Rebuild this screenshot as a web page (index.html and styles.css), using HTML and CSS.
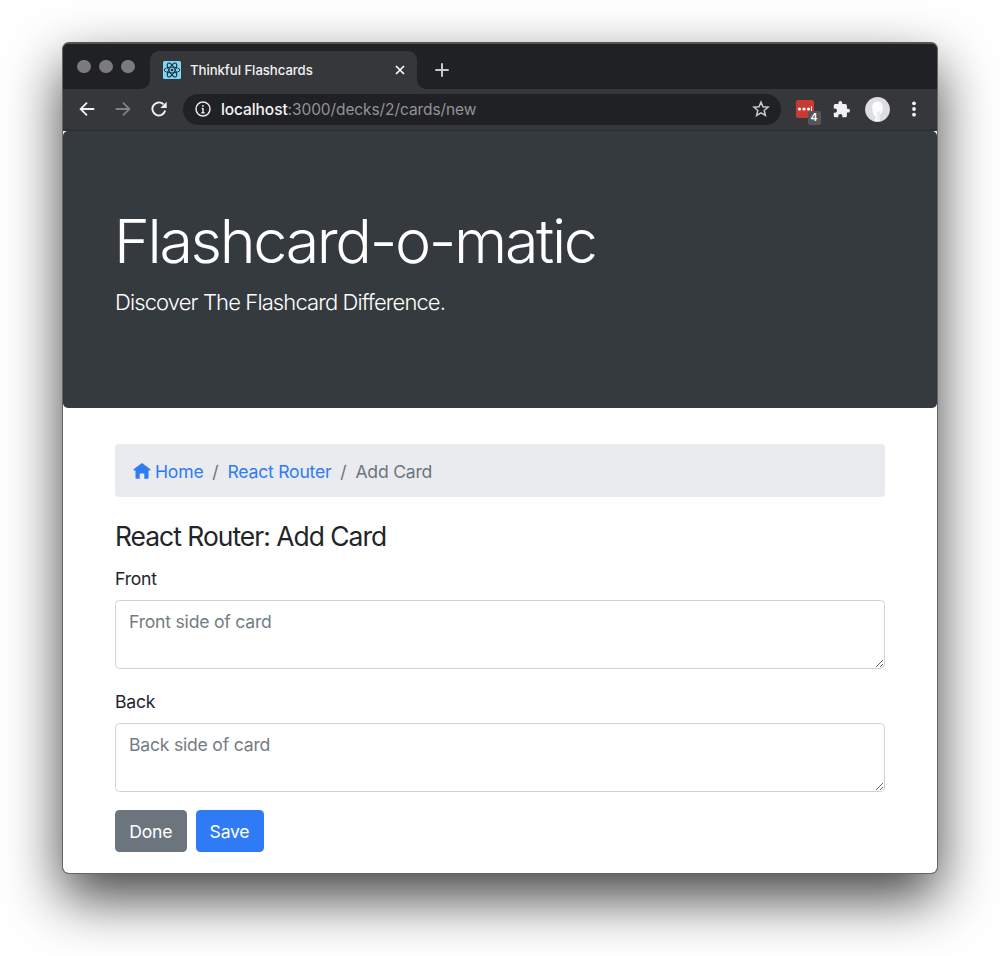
FILE: index.html
```html
<!DOCTYPE html>
<html lang="en">
<head>
<meta charset="utf-8">
<title>Thinkful Flashcards</title>
<link rel="stylesheet" href="styles.css">
</head>
<body>
<div class="window">
  <div class="tabstrip">
    <div class="lights"><span class="light"></span><span class="light"></span><span class="light"></span></div>
    <div class="tab">
      <svg class="favicon" viewBox="0 0 18 18" width="18" height="18"><rect width="18" height="18" rx="1.5" fill="#7fd7f8"/><g fill="none" stroke="#20333c" stroke-width="1"><ellipse cx="9" cy="9" rx="7.8" ry="2.9"/><ellipse cx="9" cy="9" rx="7.8" ry="2.9" transform="rotate(60 9 9)"/><ellipse cx="9" cy="9" rx="7.8" ry="2.9" transform="rotate(120 9 9)"/></g><circle cx="9" cy="9" r="1.3" fill="#20333c"/></svg>
      <span class="tab-title">Thinkful Flashcards</span>
      <svg class="tab-close" viewBox="0 0 10 10" width="10" height="10"><path d="M1 1l8 8M9 1L1 9" stroke="#fff" stroke-width="1.7"/></svg>
    </div>
    <svg class="newtab" viewBox="0 0 14 14" width="14" height="14"><path d="M7 .3v13.4M.3 7h13.4" stroke="#c6c8cc" stroke-width="2"/></svg>
  </div>
  <div class="toolbar">
    <div class="nav">
      <svg viewBox="0 0 16 16" width="16" height="16"><path d="M15.3 8H1.8M8 1.6L1.6 8L8 14.4" fill="none" stroke="#f1f1f2" stroke-width="1.8"/></svg>
      <svg viewBox="0 0 16 16" width="16" height="16"><path d="M.7 8h13.5M8 1.6L14.4 8L8 14.4" fill="none" stroke="#828286" stroke-width="1.8"/></svg>
      <svg viewBox="0 0 16 16" width="16" height="16"><path d="M14.2 9.6A6.5 6.5 0 1 1 12.6 3.4" fill="none" stroke="#f1f1f2" stroke-width="1.9"/><path d="M15.7.7v6.400H9.300z" fill="#f1f1f2"/></svg>
    </div>
    <div class="address">
      <svg viewBox="0 0 16 16" width="16" height="16"><circle cx="8" cy="8" r="7" fill="none" stroke="#e8e8ea" stroke-width="1.5"/><path d="M8 7v5M6.700 7.400H8M6.400 11.700h3.200M8 4v1.800" stroke="#e8e8ea" stroke-width="1.500"/></svg>
      <span class="url"><b>localhost</b>:3000/decks/2/cards/new</span>
      <svg class="star" viewBox="0 0 18 18" width="18" height="18"><path d="M9 2.1l2 4.700 5.100.4-3.900 3.300 1.200 5L9 12.800l-4.400 2.700 1.200-5L1.900 7.200l5.100-.4z" fill="none" stroke="#c8c9cd" stroke-width="1.500"/></svg>
    </div>
    <div class="extensions">
      <div class="ext">
        <svg viewBox="0 0 18 18" width="18" height="18"><rect width="18" height="18" rx="2" fill="#c83b33"/><g fill="#fff"><circle cx="3.500" cy="9" r="1.600"/><circle cx="8" cy="9" r="1.600"/><circle cx="12.500" cy="9" r="1.600"/><path d="M15 6h.9v5H15z"/></g></svg>
        <span class="badge">4</span>
      </div>
      <svg class="puzzle" viewBox="1 1 22 22" width="17" height="17"><path fill="#f1f1f2" d="M20.500 11H19V7a2 2 0 0 0-2-2h-4V3.500a2.500 2.500 0 0 0-5 0V5H4a2 2 0 0 0-2 2v3.800h1.500a2.700 2.700 0 0 1 0 5.400H2V20a2 2 0 0 0 2 2h3.800v-1.500a2.700 2.700 0 0 1 5.400 0V22H17a2 2 0 0 0 2-2v-4h1.500a2.500 2.500 0 0 0 0-5z"/></svg>
      <svg class="avatar" viewBox="0 0 25 25" width="25" height="25"><circle cx="12.500" cy="12.500" r="12.400" fill="#dedede"/><path d="M7.300 11C7 6.500 9 4.500 12.500 4.500s5.600 2.500 5.300 7c-.3 4-1.800 5.500-3.300 6.500l.5 5.500q-3 1-5.800 0l2-4C8.500 19 7.500 15 7.300 11z" fill="#fbfcfd"/><path d="M12 14.500q3 .5 4-1.500l-1.500 5 .3 5-2.800.4z" fill="#e9edf2"/></svg>
      <svg viewBox="0 0 4 16" width="4" height="16"><g fill="#f1f1f2"><circle cx="2" cy="2.300" r="1.900"/><circle cx="2" cy="8" r="1.900"/><circle cx="2" cy="13.700" r="1.900"/></g></svg>
    </div>
  </div>
  <div class="page">
    <header class="jumbotron">
      <h1 class="brand">Flashcard-o-matic</h1>
      <p class="lead">Discover The Flashcard Difference.</p>
    </header>
    <main class="container">
      <nav class="breadcrumb">
        <svg viewBox="0 0 18 16" width="18" height="16"><path d="M9 0L.3 6.600l.6.900h1.600V15q0 .8.800.8h3.400v-5.300h4.600v5.300h3.400q.8 0 .8-.8V7.500h1.600l.6-.9z" fill="#2f7bf6"/></svg>
        <a class="home">Home</a><span class="sep">/</span><a class="deck">React Router</a><span class="sep">/</span><span class="current">Add Card</span>
      </nav>
      <h2 class="title">React Router: Add Card</h2>
      <label class="label">Front</label>
      <textarea class="field" placeholder="Front side of card"></textarea>
      <label class="label label-back">Back</label>
      <textarea class="field" placeholder="Back side of card"></textarea>
      <div class="actions"><button class="btn done">Done</button><button class="btn save">Save</button></div>
    </main>
  </div>
</div>
</body>
</html>
```
FILE: styles.css
```css
* { box-sizing: border-box; }
body {
  margin: 0;
  height: 956px;
  padding: 42px 62px 82px;
  overflow: hidden;
  background: #fff;
  font-family: Inter, "Liberation Sans", sans-serif;
  font-size: 17.6px;
  letter-spacing: -.22px;
  color: #212529;
}
svg { display: block; flex: none; }
.window {
  height: 832px;
  border: 1px solid #626466;
  border-top: 2px solid #505653;
  border-radius: 7px;
  overflow: hidden;
  background: #36373b;
  box-shadow: 0 24px 56px rgba(0, 0, 0, .74);
}
.tabstrip {
  height: 45px;
  display: flex;
  align-items: flex-end;
  background: #202124;
}
.lights { display: flex; gap: 8.5px; padding-left: 14px; width: 87px; align-self: flex-start; padding-top: 15.5px; }
.light { width: 13.7px; height: 13.7px; border-radius: 50%; background: #7b7b7d; flex: none; }
.tab {
  width: 267px;
  height: 38px;
  padding: 0 13px;
  display: flex;
  align-items: center;
  background: #36373b;
  border-radius: 9px 9px 0 0;
  position: relative;
}
.tab::before, .tab::after {
  content: "";
  position: absolute;
  bottom: 0;
  width: 9px;
  height: 9px;
}
.tab::before { left: -9px; background: radial-gradient(circle at 0 0, #202124 8.5px, #36373b 9px); }
.tab::after { right: -9px; background: radial-gradient(circle at 100% 0, #202124 8.5px, #36373b 9px); }
.tab-title { margin-left: 9px; font-size: 13.2px; font-weight: 500; letter-spacing: -.06px; color: #f1f1f2; white-space: nowrap; }
.tab-close { margin-left: auto; margin-right: -1px; }
.newtab { margin: 0 0 12px 18px; }
.toolbar {
  height: 42px;
  padding-bottom: 1px;
  display: flex;
  align-items: center;
  background: #36373b;
  border-bottom: 1px solid #2b2c2f;
}
.nav { display: flex; gap: 20px; padding-left: 16px; width: 120px; }
.address {
  width: 598px;
  height: 31px;
  border-radius: 16px;
  background: #202124;
  display: flex;
  align-items: center;
  padding: 0 11px 0 12px;
}
.url { margin-left: 10px; font-size: 15.5px; letter-spacing: -.09px; color: #929396; white-space: nowrap; }
.url b { font-weight: 500; color: #f4f4f5; }
.star { margin-left: auto; }
.extensions { display: flex; align-items: center; padding-left: 15px; }
.ext { position: relative; }
.badge {
  position: absolute;
  left: 11.5px;
  top: 11px;
  width: 13px;
  height: 14px;
  border-radius: 2px;
  background: #545557;
  color: #fff;
  font-size: 10.5px;
  font-weight: 600;
  line-height: 14px;
  text-align: center;
}
.puzzle { margin-left: 19px; }
.avatar { margin: 0 21.5px 0 15px; }
.page { height: 743px; background: #fff; }
.jumbotron {
  height: 277px;
  padding: 76px 52px 0;
  border-radius: 5px;
  background: #353a3e;
  color: #fff;
}
.brand { margin: 0 0 0 -1px; font-size: 61px; line-height: 68px; font-weight: 300; letter-spacing: -2.35px; white-space: nowrap; }
.lead { margin: 11px 0 0; font-size: 22px; line-height: 33px; font-weight: 300; letter-spacing: -.88px; white-space: nowrap; }
.container { padding: 36px 52px 0; }
.breadcrumb {
  height: 53px;
  padding: 1px 18px 0;
  display: flex;
  align-items: center;
  border-radius: 4px;
  background: #e9ebef;
  white-space: nowrap;
}
.breadcrumb a { color: #2f7bf6; }
.home { margin-left: 4px; }
.sep { width: 24px; text-align: center; color: #6c757d; }
.current { color: #6c757d; }
.title { margin: 21px 0 10px; font-size: 26.4px; line-height: 37px; font-weight: 400; letter-spacing: -.98px; white-space: nowrap; }
.label { display: block; line-height: 27px; margin-bottom: 8px; }
.field {
  display: block;
  width: 100%;
  height: 69px;
  padding: 7px 13px;
  border: 1px solid #ced4da;
  border-radius: 4.4px;
  background: #fff;
  font: inherit;
  letter-spacing: inherit;
  line-height: 28px;
  color: #495057;
  resize: vertical;
  overflow: hidden;
}
.field::placeholder { color: #747c84; opacity: 1; }
.label-back { margin-top: 19px; }
.actions { display: flex; gap: 9px; margin-top: 18px; }
.btn {
  height: 42px;
  padding: 1px 0 0;
  border: 0;
  border-radius: 4.4px;
  font: inherit;
  letter-spacing: inherit;
  color: #fff;
}
.done { width: 71.5px; background: #6c757d; }
.save { width: 68px; background: #2f7bf6; }
```
